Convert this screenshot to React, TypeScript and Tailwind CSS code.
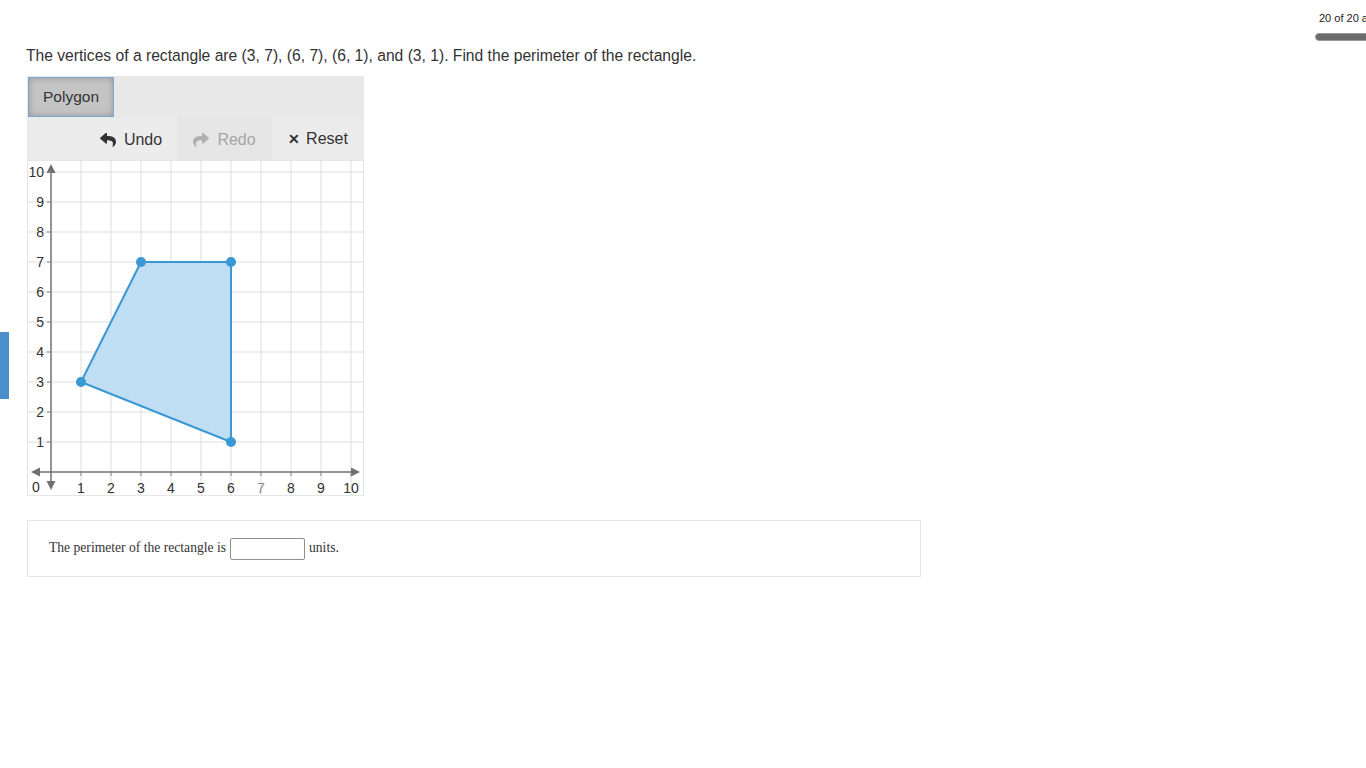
import React from "react";

const U = 30;
const OX = 24;
const OY = 312;
const px = (x: number) => OX + x * U;
const py = (y: number) => OY - y * U;

function Graph() {
  const pts: [number, number][] = [
    [3, 7],
    [6, 7],
    [6, 1],
    [1, 3],
  ];
  const poly = pts.map(([x, y]) => `${px(x)},${py(y)}`).join(" ");
  const ks = [1, 2, 3, 4, 5, 6, 7, 8, 9, 10];
  return (
    <svg width={337} height={336} className="block" style={{ fontFamily: "'Liberation Sans', Arial, sans-serif" }}>
      <rect x={0.5} y={0.5} width={336} height={335} fill="#fff" stroke="#e6e6e6" />
      {ks.map((k) => (
        <line key={"v" + k} x1={px(k)} y1={0} x2={px(k)} y2={336} stroke="#dedede" strokeWidth={1} />
      ))}
      {ks.map((k) => (
        <line key={"h" + k} x1={0} y1={py(k)} x2={337} y2={py(k)} stroke="#dedede" strokeWidth={1} />
      ))}
      {/* axes */}
      <line x1={12} y1={OY} x2={326} y2={OY} stroke="#707070" strokeWidth={1.5} />
      <line x1={OX} y1={10} x2={OX} y2={322} stroke="#707070" strokeWidth={1.5} />
      <polygon points={`4,${OY} 13,${OY - 4.5} 13,${OY + 4.5}`} fill="#707070" />
      <polygon points={`333,${OY} 324,${OY - 4.5} 324,${OY + 4.5}`} fill="#707070" />
      <polygon points={`${OX},4 ${OX - 4.5},13 ${OX + 4.5},13`} fill="#707070" />
      <polygon points={`${OX},330 ${OX - 4.5},321 ${OX + 4.5},321`} fill="#707070" />
      {ks.map((k) => (
        <line key={"tx" + k} x1={px(k)} y1={OY} x2={px(k)} y2={OY + 4} stroke="#8a8a8a" strokeWidth={1} />
      ))}
      {ks.map((k) => (
        <line key={"ty" + k} x1={OX - 4} y1={py(k)} x2={OX} y2={py(k)} stroke="#8a8a8a" strokeWidth={1} />
      ))}
      {ks.map((k) => (
        <text key={"lx" + k} x={px(k)} y={OY + 21} fontSize={14} textAnchor="middle" fill={k === 7 ? "#8a8a8a" : "#333"}>
          {k}
        </text>
      ))}
      {ks.map((k) => (
        <text key={"ly" + k} x={17} y={py(k) + 5} fontSize={14} textAnchor="end" fill="#333">
          {k}
        </text>
      ))}
      <text x={9} y={OY + 20} fontSize={14} textAnchor="middle" fill="#333">
        0
      </text>
      <polygon points={poly} fill="#c0def3" stroke="#3a98d4" strokeWidth={2} strokeLinejoin="round" />
      {pts.map(([x, y], i) => (
        <circle key={i} cx={px(x)} cy={py(y)} r={5} fill="#3a98d4" />
      ))}
    </svg>
  );
}

function UndoIcon() {
  return (
    <svg width="16" height="14" viewBox="0 0 512 448" className="inline-block">
      <path
        fill="#333"
        d="M8.3 189.8L184.3 37.8c15.4-13.3 39.7-2.5 39.7 18.2v80.1c160.6 1.8 288 34 288 186.3 0 61.4-39.6 122.3-83.3 154.1-13.7 9.9-33.1-2.5-28.1-18.6 45.3-144.9-21.5-183.4-176.6-185.6V360c0 20.7-24.3 31.5-39.7 18.2l-176-152c-11.1-9.600-11.1-26.8 0-36.4z"
        transform="translate(0,-40)"
      />
    </svg>
  );
}

function RedoIcon() {
  return (
    <svg width="16" height="14" viewBox="0 0 512 448" className="inline-block">
      <path
        fill="#b0b0b0"
        d="M503.7 189.8L327.7 37.9C312.3 24.5 288 35.3 288 56v80.1c-160.6 1.8-288 34-288 186.3 0 61.4 39.6 122.3 83.3 154.1 13.7 9.9 33.1-2.5 28.1-18.6C66.1 313.8 132.9 275.3 288 273.1V360c0 20.7 24.3 31.5 39.7 18.2l176-152c11.1-9.6 11.1-26.8 0-36.4z"
        transform="translate(0,-40)"
      />
    </svg>
  );
}

export default function App() {
  return (
    <div className="relative w-[1366px] h-[768px] bg-white overflow-hidden" style={{ fontFamily: "'Liberation Sans', Arial, sans-serif" }}>
      {/* top-right progress */}
      <div className="absolute top-[10px] left-[1319px] whitespace-nowrap text-[11px] text-[#222]">
        20 of 20 a
      </div>
      <div className="absolute top-[33px] left-[1315px] w-[80px] h-[8px] rounded-full bg-[#6b6b6b] border border-[#9a9a9a]" />

      {/* left tab */}
      <div className="absolute left-0 top-[332px] w-[9px] h-[67px] bg-[#4a8fc9]" />

      <div className="pl-[26px] pt-[46px]">
        <p className="text-[15.65px] leading-[20px] text-[#333]">
          The vertices of a rectangle are (3, 7), (6, 7), (6, 1), and (3, 1). Find the perimeter of the rectangle.
        </p>

        <div className="mt-[10px] ml-[1px] w-[337px]">
          <div className="bg-[#e8e8e8] h-[42px] pt-[1px] pl-[1px]">
            <div
              className="w-[86px] h-[40px] flex items-center justify-center text-[15.5px] text-[#333] border border-[#7ea8d4] bg-[#c4c4c4]"
              style={{ boxShadow: "inset 0 0 6px rgba(0,0,0,0.25)" }}
            >
              Polygon
            </div>
          </div>
          <div className="bg-[#ebebeb] h-[42px] flex justify-end text-[16px]">
            <div className="w-[92px] flex items-center justify-center gap-[8px] bg-[#ececec] text-[#333] pt-[2px]">
              <UndoIcon />
              <span>Undo</span>
            </div>
            <div className="w-[95px] flex items-center justify-center gap-[8px] bg-[#e6e6e6] text-[#a5a5a5] pt-[2px]">
              <RedoIcon />
              <span>Redo</span>
            </div>
            <div className="w-[92px] flex items-center justify-center gap-[6px] text-[#333]">
              <span className="text-[14px] font-bold">✕</span>
              <span>Reset</span>
            </div>
          </div>
          <Graph />
        </div>

        <div className="mt-[24px] ml-[1px] w-[894px] h-[57px] border border-[#e6e6e6] flex items-center pl-[21px] text-[13.6px] text-[#333]" style={{ fontFamily: "'Liberation Serif', 'Times New Roman', serif" }}>
          <span>The perimeter of the rectangle is</span>
          <span className="inline-block mx-[4px] w-[75px] h-[22px] border border-[#8f8f8f] rounded-[2px] bg-white" />
          <span>units.</span>
        </div>
      </div>
    </div>
  );
}
